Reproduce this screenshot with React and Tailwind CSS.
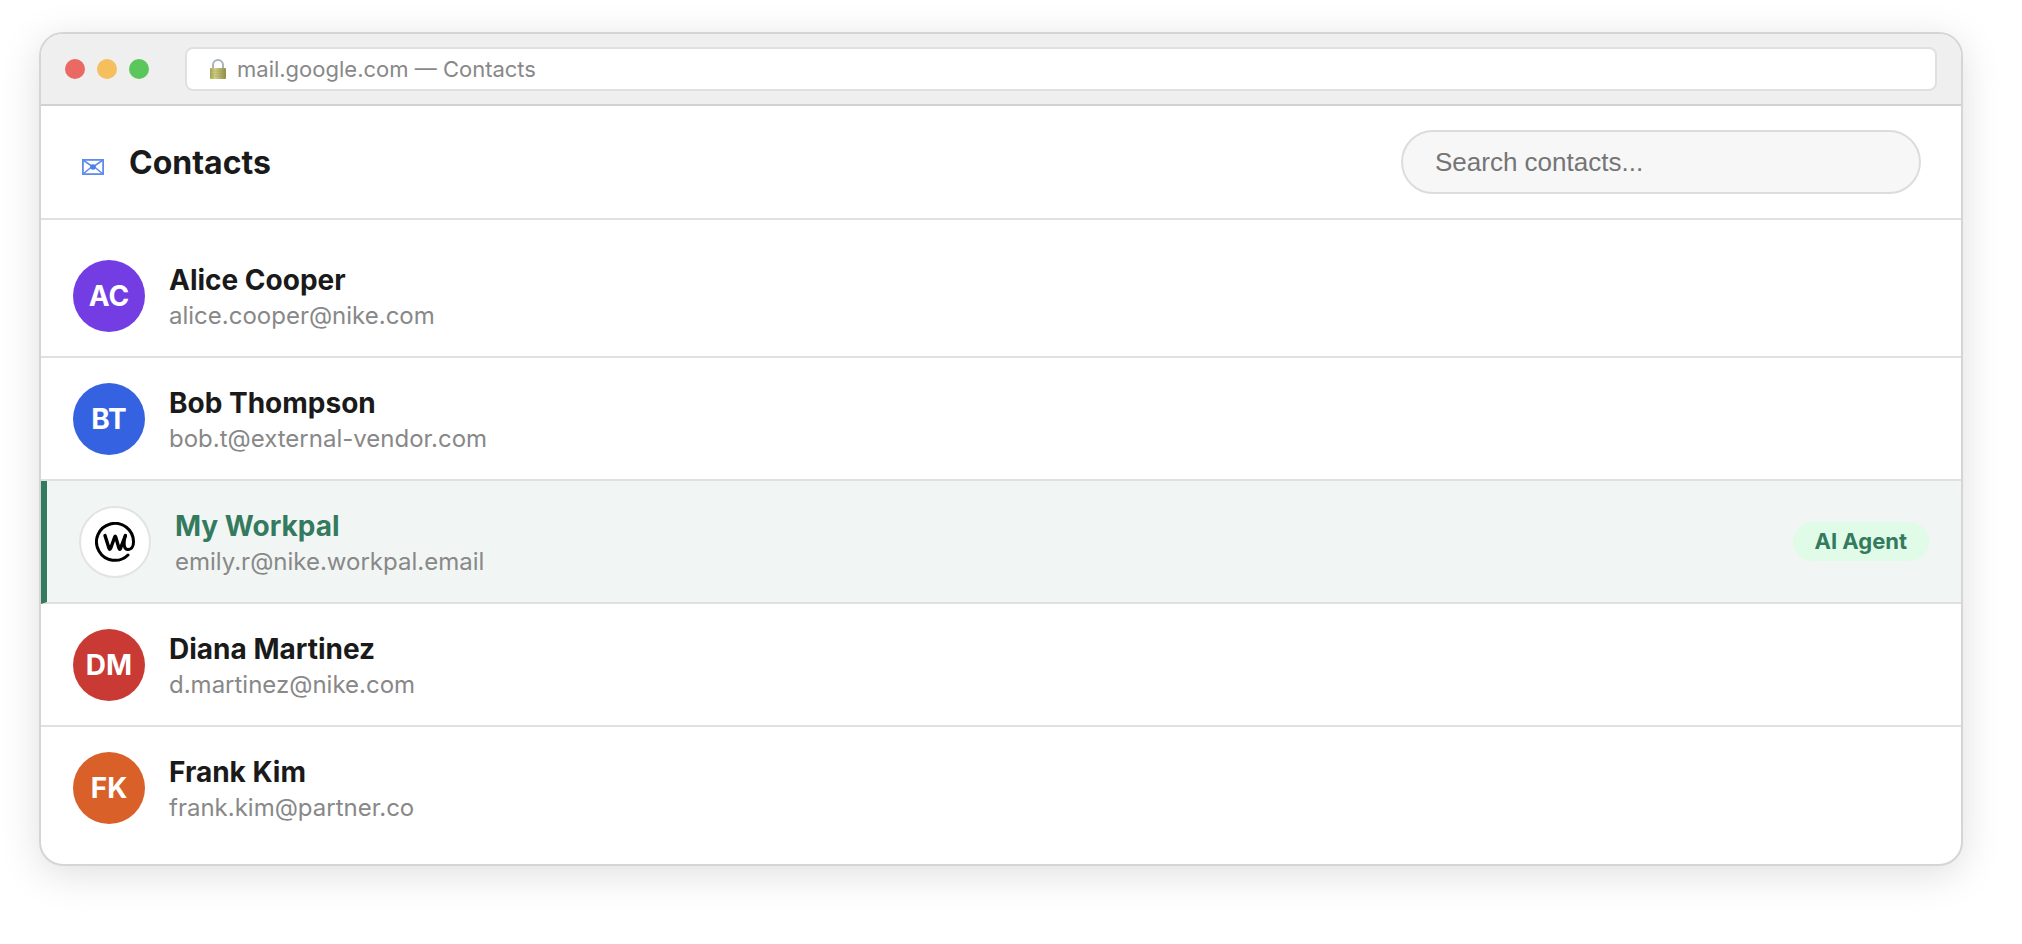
import React from 'react';

const contacts = [
  { initials: 'AC', name: 'Alice Cooper', email: 'alice.cooper@nike.com', color: 'bg-[#733de3]' },
  { initials: 'BT', name: 'Bob Thompson', email: 'bob.t@external-vendor.com', color: 'bg-[#3562e1]' },
  { name: 'My Workpal', email: 'emily.r@nike.workpal.email', agent: true },
  { initials: 'DM', name: 'Diana Martinez', email: 'd.martinez@nike.com', color: 'bg-[#c93a34]' },
  { initials: 'FK', name: 'Frank Kim', email: 'frank.kim@partner.co', color: 'bg-[#da6029]' },
];

function LockIcon() {
  return (
    <svg className="w-4 h-5 shrink-0" viewBox="0 0 16 20" aria-hidden="true">
      <defs>
        <linearGradient id="lockBody" x1="0" y1="0" x2="1" y2="0">
          <stop offset="0" stopColor="#a3a353" />
          <stop offset="0.3" stopColor="#d0d084" />
          <stop offset="1" stopColor="#938d4c" />
        </linearGradient>
      </defs>
      <path d="M3 10V6a5 5 0 0110 0v4" fill="none" stroke="#a9b3b8" strokeWidth="2" />
      <rect x="0" y="9" width="16" height="11" rx="1" fill="url(#lockBody)" />
      <path d="M0.5 12h15M0.5 14.5h15M0.5 17h15" stroke="#8c8840" strokeWidth="0.6" opacity="0.4" />
    </svg>
  );
}

function MailIcon() {
  return (
    <svg className="w-[22px] h-4 shrink-0" viewBox="0 0 22 16" fill="none" stroke="#5f8cea" aria-hidden="true">
      <rect x="0.9" y="0.9" width="20.2" height="14.2" strokeWidth="1.8" />
      <path d="M1 1l10 7 10-7M1 15l8.5-7M21 15l-8.5-7" strokeWidth="1.6" />
      <circle cx="11" cy="8" r="2.8" fill="#4c7fe8" stroke="none" />
    </svg>
  );
}

function WorkpalLogo() {
  return (
    <svg className="w-10 h-10" viewBox="0 0 40 40" fill="none" stroke="#000" strokeLinecap="round" strokeLinejoin="round" aria-hidden="true">
      <path strokeWidth="3.4" d="M10 13.5L14 26.2Q14.8 28.4 15.7 26.2L19.7 15Q20.2 13.6 20.7 15L24 26.2Q24.8 28.4 25.6 26.2L30.4 13.5" />
      <path strokeWidth="3" d="M30.4 13.5C28.8 19 28 27.5 33 27.5C37 27.5 38.5 23.5 38.5 20A18.5 18.5 0 1033 33" />
    </svg>
  );
}

function Avatar({ contact }) {
  if (contact.agent) {
    return (
      <div className="w-18 h-18 shrink-0 rounded-full bg-white border-2 border-[#e2e4e3] flex items-center justify-center">
        <WorkpalLogo />
      </div>
    );
  }
  return (
    <div className={`w-18 h-18 shrink-0 rounded-full flex items-center justify-center text-white text-[28px] font-bold ${contact.color}`}>
      {contact.initials}
    </div>
  );
}

function ContactRow({ contact }) {
  return (
    <li
      className={`flex items-center gap-6 min-h-[123px] px-8 border-b-2 border-b-[#e0e0e0] last:border-b-0 last:min-h-[121px] ${
        contact.agent ? 'border-l-6 border-l-[#347a5e] bg-[#f1f6f4] border-b-[#d6dad8]' : ''
      }`}
    >
      <Avatar contact={contact} />
      <div className="flex-1 min-w-0">
        <p className={`text-[28px] leading-[41px] font-bold ${contact.agent ? 'text-[#347a5e]' : 'text-[#1a1a1a]'}`}>{contact.name}</p>
        <p className="text-2xl leading-[30px] text-[#888]">{contact.email}</p>
      </div>
      {contact.agent && (
        <span className="px-[22px] rounded-full bg-[#e0fbe7] text-[22px] leading-[39px] font-bold text-[#347a5e]">AI Agent</span>
      )}
    </li>
  );
}

export default function App() {
  return (
    <div className="pt-8 pl-[39px] pr-[59px] pb-[78px] bg-white font-['Inter',sans-serif]">
      <div className="rounded-3xl border-2 border-[#d5d5d5] bg-white overflow-hidden shadow-[0_8px_40px_rgba(0,0,0,0.13)]">
        <div className="flex items-center px-6 py-[13px] bg-[#efefef] border-b-2 border-[#d2d2d2]">
          <div className="flex gap-3 mr-9">
            <span className="w-5 h-5 rounded-full bg-[#ea6962]" />
            <span className="w-5 h-5 rounded-full bg-[#f4bf5c]" />
            <span className="w-5 h-5 rounded-full bg-[#5bc65b]" />
          </div>
          <div className="flex-1 flex items-center gap-[11px] h-11 px-[23px] rounded-lg border-2 border-[#e0e0e0] bg-white text-[22px] text-[#888]">
            <LockIcon />
            <span>mail.google.com — Contacts</span>
          </div>
        </div>

        <header className="flex items-center justify-between pl-[41px] pr-10 py-6 border-b-2 border-[#e0e0e0]">
          <div className="flex items-center gap-[25px] pt-0.5">
            <div className="pt-2">
              <MailIcon />
            </div>
            <h1 className="text-[32px] font-bold text-[#1a1a1a]">Contacts</h1>
          </div>
          <input
            type="text"
            aria-label="Search contacts"
            placeholder="Search contacts..."
            className="w-[520px] h-16 px-8 rounded-full border-2 border-[#dcdcdc] bg-[#f7f7f7] font-['Liberation_Sans',Arial,sans-serif] text-[26px] text-[#1a1a1a] placeholder:text-[#757575] outline-none"
          />
        </header>

        <ul className="pt-[15px] pb-4">
          {contacts.map((contact) => (
            <ContactRow key={contact.email} contact={contact} />
          ))}
        </ul>
      </div>
    </div>
  );
}
